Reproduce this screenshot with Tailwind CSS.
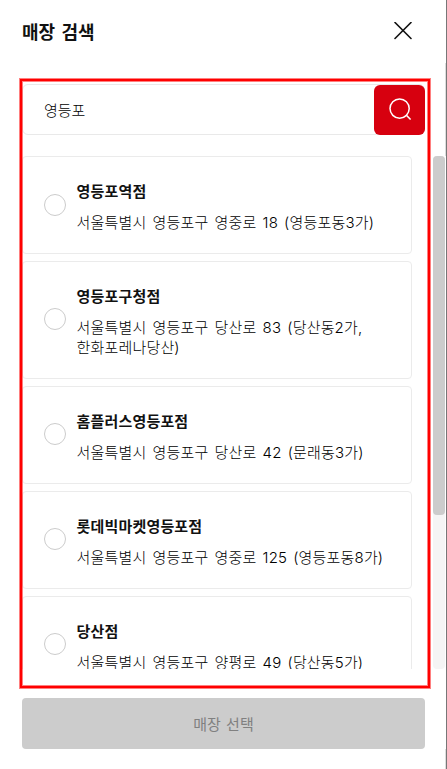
<!DOCTYPE html>
<html lang="ko">
<head>
    <meta charset="UTF-8">
    <meta name="viewport" content="width=device-width, initial-scale=1.0">
    <title>매장 검색</title>
    <script src="https://cdn.jsdelivr.net/npm/@tailwindcss/browser@4"></script>
</head>
<body class="bg-white overflow-hidden font-['Inter','Noto_Sans_CJK_KR',sans-serif] text-[#111]">
    <div class="relative flex flex-col w-[447px] h-[769px] border-r border-[#777]">
        <!-- Header -->
        <header class="flex items-center justify-between h-[61px] pl-[22px] pr-[34px] shrink-0">
            <h1 class="text-lg font-bold leading-6 pt-1 [word-spacing:2px]">매장 검색</h1>
            <button aria-label="닫기">
                <svg class="block w-[18px] h-[18px]" viewBox="0 0 18 18" fill="none" stroke="#111" stroke-width="1.6" stroke-linecap="round">
                    <path d="M1 0.5L17 16.5M17 0.5L1 16.5"/>
                </svg>
            </button>
        </header>

        <!-- Search -->
        <div class="flex h-[51px] ml-[22px] w-[403px] mt-[23px] shrink-0 border border-[#e9e9e9] rounded-md">
            <input type="text" value="영등포" class="flex-1 min-w-0 pl-[21px] pt-1 text-[15px] font-light text-black outline-none">
            <button aria-label="검색" class="flex items-center justify-center w-[51px] h-[50px] -mr-px bg-[#d7000f] rounded-md">
                <svg class="block w-6 h-6" viewBox="0 0 24 24" fill="none" stroke="#fff" stroke-width="1.5">
                    <circle cx="11.6" cy="10.6" r="9.6"/>
                    <path d="M18.4 17.2L22.6 21.6"/>
                </svg>
            </button>
        </div>

        <!-- Store list -->
        <div class="flex h-[513px] mt-[21px] shrink-0">
            <ul class="flex flex-col gap-[7px] ml-[22px] w-[390px] h-[513px] overflow-hidden text-[15px] leading-5 tracking-[0.18px]">
                <li class="flex items-center gap-2.5 h-[98px] shrink-0 border border-[#ebebeb] rounded pl-[21px]">
                    <span class="size-[22px] shrink-0 rounded-full border border-[#ccc]"></span>
                    <div class="w-[312px] pt-1 pl-[0.5px]">
                        <p class="font-bold mb-[11px]">영등포역점</p>
                        <p class="font-light text-black [word-spacing:1.7px]">서울특별시 영등포구 영중로 18 (영등포동3가)</p>
                    </div>
                </li>
                <li class="flex items-center gap-2.5 h-[118px] shrink-0 border border-[#ebebeb] rounded pl-[21px]">
                    <span class="size-[22px] mb-0.5 shrink-0 rounded-full border border-[#ccc]"></span>
                    <div class="w-[312px] pt-1 pl-[0.5px]">
                        <p class="font-bold mb-[11px]">영등포구청점</p>
                        <p class="font-light text-black [word-spacing:1.7px]">서울특별시 영등포구 당산로 83 (당산동2가,<br>한화포레나당산)</p>
                    </div>
                </li>
                <li class="flex items-center gap-2.5 h-[98px] shrink-0 border border-[#ebebeb] rounded pl-[21px]">
                    <span class="size-[22px] mb-0.5 shrink-0 rounded-full border border-[#ccc]"></span>
                    <div class="w-[312px] pt-1 pl-[0.5px]">
                        <p class="font-bold mb-[11px]">홈플러스영등포점</p>
                        <p class="font-light text-black [word-spacing:1.7px]">서울특별시 영등포구 당산로 42 (문래동3가)</p>
                    </div>
                </li>
                <li class="flex items-center gap-2.5 h-[98px] shrink-0 border border-[#ebebeb] rounded pl-[21px]">
                    <span class="size-[22px] mb-0.5 shrink-0 rounded-full border border-[#ccc]"></span>
                    <div class="w-[312px] pt-1 pl-[0.5px]">
                        <p class="font-bold mb-[11px]">롯데빅마켓영등포점</p>
                        <p class="font-light text-black [word-spacing:1.7px]">서울특별시 영등포구 영중로 125 (영등포동8가)</p>
                    </div>
                </li>
                <li class="flex items-center gap-2.5 h-[98px] shrink-0 border border-[#ebebeb] rounded pl-[21px]">
                    <span class="size-[22px] mb-0.5 shrink-0 rounded-full border border-[#ccc]"></span>
                    <div class="w-[312px] pt-1 pl-[0.5px]">
                        <p class="font-bold mb-[11px]">당산점</p>
                        <p class="font-light text-black [word-spacing:1.7px]">서울특별시 영등포구 양평로 49 (당산동5가)</p>
                    </div>
                </li>
            </ul>
            <!-- Scrollbar -->
            <div class="ml-[21px] w-3 h-full bg-[#f5f5f5] rounded">
                <div class="h-[359px] bg-[#ccc] rounded"></div>
            </div>
        </div>

        <!-- Submit -->
        <button class="ml-[22px] mt-[29px] w-[403px] h-[51px] pt-[3px] shrink-0 bg-[#ccc] text-[#808080] text-[15px] rounded [word-spacing:1px]">매장 선택</button>

        <!-- Panel edge -->
        <div class="absolute right-0 top-[63px] w-px h-[93px] bg-[#ddd]"></div>
        <div class="absolute right-0 bottom-0 w-px h-5 bg-[#ddd]"></div>

        <!-- Highlight frame -->
        <div class="absolute left-5 top-[79px] w-[410px] h-[609px] border-2 border-[#f00] shadow-[0_0_0_1px_#ff000080,inset_0_0_0_1px_#ff000080] pointer-events-none"></div>
    </div>
</body>
</html>
